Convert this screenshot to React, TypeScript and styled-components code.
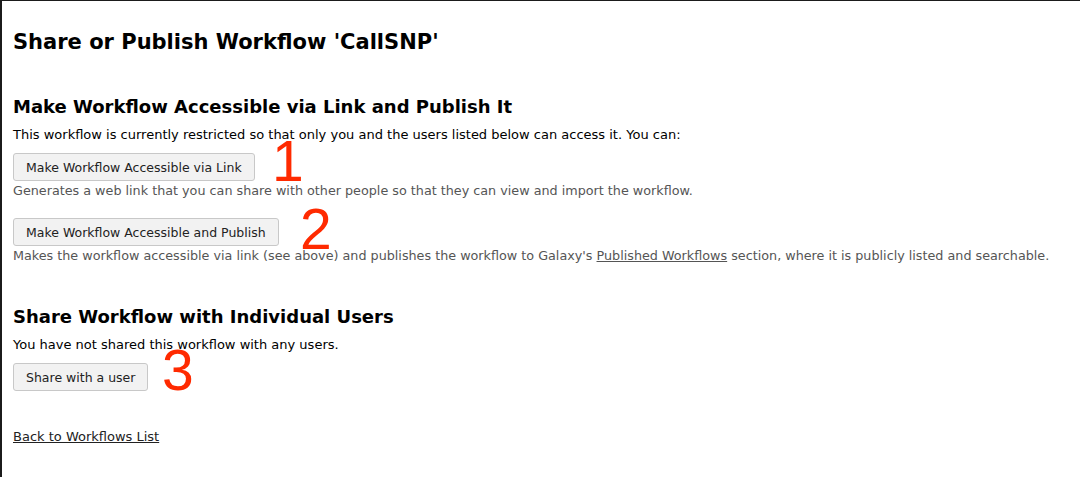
import React from 'react';
import styled, { createGlobalStyle } from 'styled-components';

const GlobalStyle = createGlobalStyle`
    html, body {
        margin: 0;
        padding: 0;
        background: #fff;
    }
    body {
        font-family: "DejaVu Sans", "Liberation Sans", sans-serif;
        font-size: 13px;
        color: #000;
    }
`

interface Iaction {
    label: string
    hint: React.ReactNode
    mark: string
    markLeft: number
    markTop: number
}

const App = () => {
    const actions: Iaction[] = [
        {
            label: 'Make Workflow Accessible via Link',
            hint: 'Generates a web link that you can share with other people so that they can view and import the workflow.',
            mark: '1',
            markLeft: 272,
            markTop: -20,
        },
        {
            label: 'Make Workflow Accessible and Publish',
            hint: (
                <>
                    Makes the workflow accessible via link (see above) and publishes the workflow to Galaxy's{' '}
                    <StHintLink href="#">Published Workflows</StHintLink> section, where it is publicly listed and searchable.
                </>
            ),
            mark: '2',
            markLeft: 300,
            markTop: -17,
        },
    ]

    return (
        <StPage>
            <GlobalStyle />
            <StTitle>Share or Publish Workflow 'CallSNP'</StTitle>

            <StSection>
                <StH2>Make Workflow Accessible via Link and Publish It</StH2>
                <StText>This workflow is currently restricted so that only you and the users listed below can access it. You can:</StText>
                {actions.map(action => (
                    <StAction key={action.mark}>
                        <StButtonRow>
                            <StButton>{action.label}</StButton>
                            <StMark left={action.markLeft} top={action.markTop}>{action.mark}</StMark>
                        </StButtonRow>
                        <StHint>{action.hint}</StHint>
                    </StAction>
                ))}
            </StSection>

            <StSection>
                <StH2>Share Workflow with Individual Users</StH2>
                <StText>You have not shared this workflow with any users.</StText>
                <StButtonRow>
                    <StButton>Share with a user</StButton>
                    <StMark left={162} top={-21}>3</StMark>
                </StButtonRow>
            </StSection>

            <StBackLink href="#">Back to Workflows List</StBackLink>
        </StPage>
    );
};

const StPage = styled.div`
    box-sizing: border-box;
    min-height: 477px;
    border-left: 2px solid #1b1b1b;
    border-top: 1px solid #1b1b1b;
    padding: 29px 0 0 11px;
`

const StTitle = styled.h1`
    margin: 0 0 42px;
    font-size: 21px;
    font-weight: bold;
    line-height: 24px;
`

const StSection = styled.div`
    margin-bottom: 42px;
    &:last-of-type {
        margin-bottom: 38px;
    }
`

const StH2 = styled.h2`
    margin: 0 0 9px;
    font-size: 18px;
    font-weight: bold;
    line-height: 22px;
`

const StText = styled.p`
    margin: 0 0 10px;
    line-height: 16px;
`

const StAction = styled.div`
    margin-bottom: 19px;
    &:last-child {
        margin-bottom: 0;
    }
`

const StButtonRow = styled.div`
    position: relative;
    display: flex;
    align-items: center;
`

const StButton = styled.button`
    font-family: inherit;
    font-size: 12.5px;
    color: #222;
    height: 28px;
    padding: 0 12px;
    background: #f2f2f2;
    border: 1px solid #c8c8c8;
    border-radius: 3px;
`

const StMark = styled.span<{ left: number; top: number }>`
    position: absolute;
    left: ${props => props.left - 13}px;
    top: ${props => props.top}px;
    font-family: "Liberation Sans", Arial, sans-serif;
    font-size: 57px;
    line-height: 57px;
    color: #ff2a00;
`

const StHint = styled.div`
    margin-top: 2px;
    font-size: 12.75px;
    color: #555;
    line-height: 16px;
`

const StHintLink = styled.a`
    color: #555;
    text-decoration: underline;
`

const StBackLink = styled.a`
    display: inline-block;
    color: #222;
    line-height: 16px;
    text-decoration: underline;
`

export default App;
